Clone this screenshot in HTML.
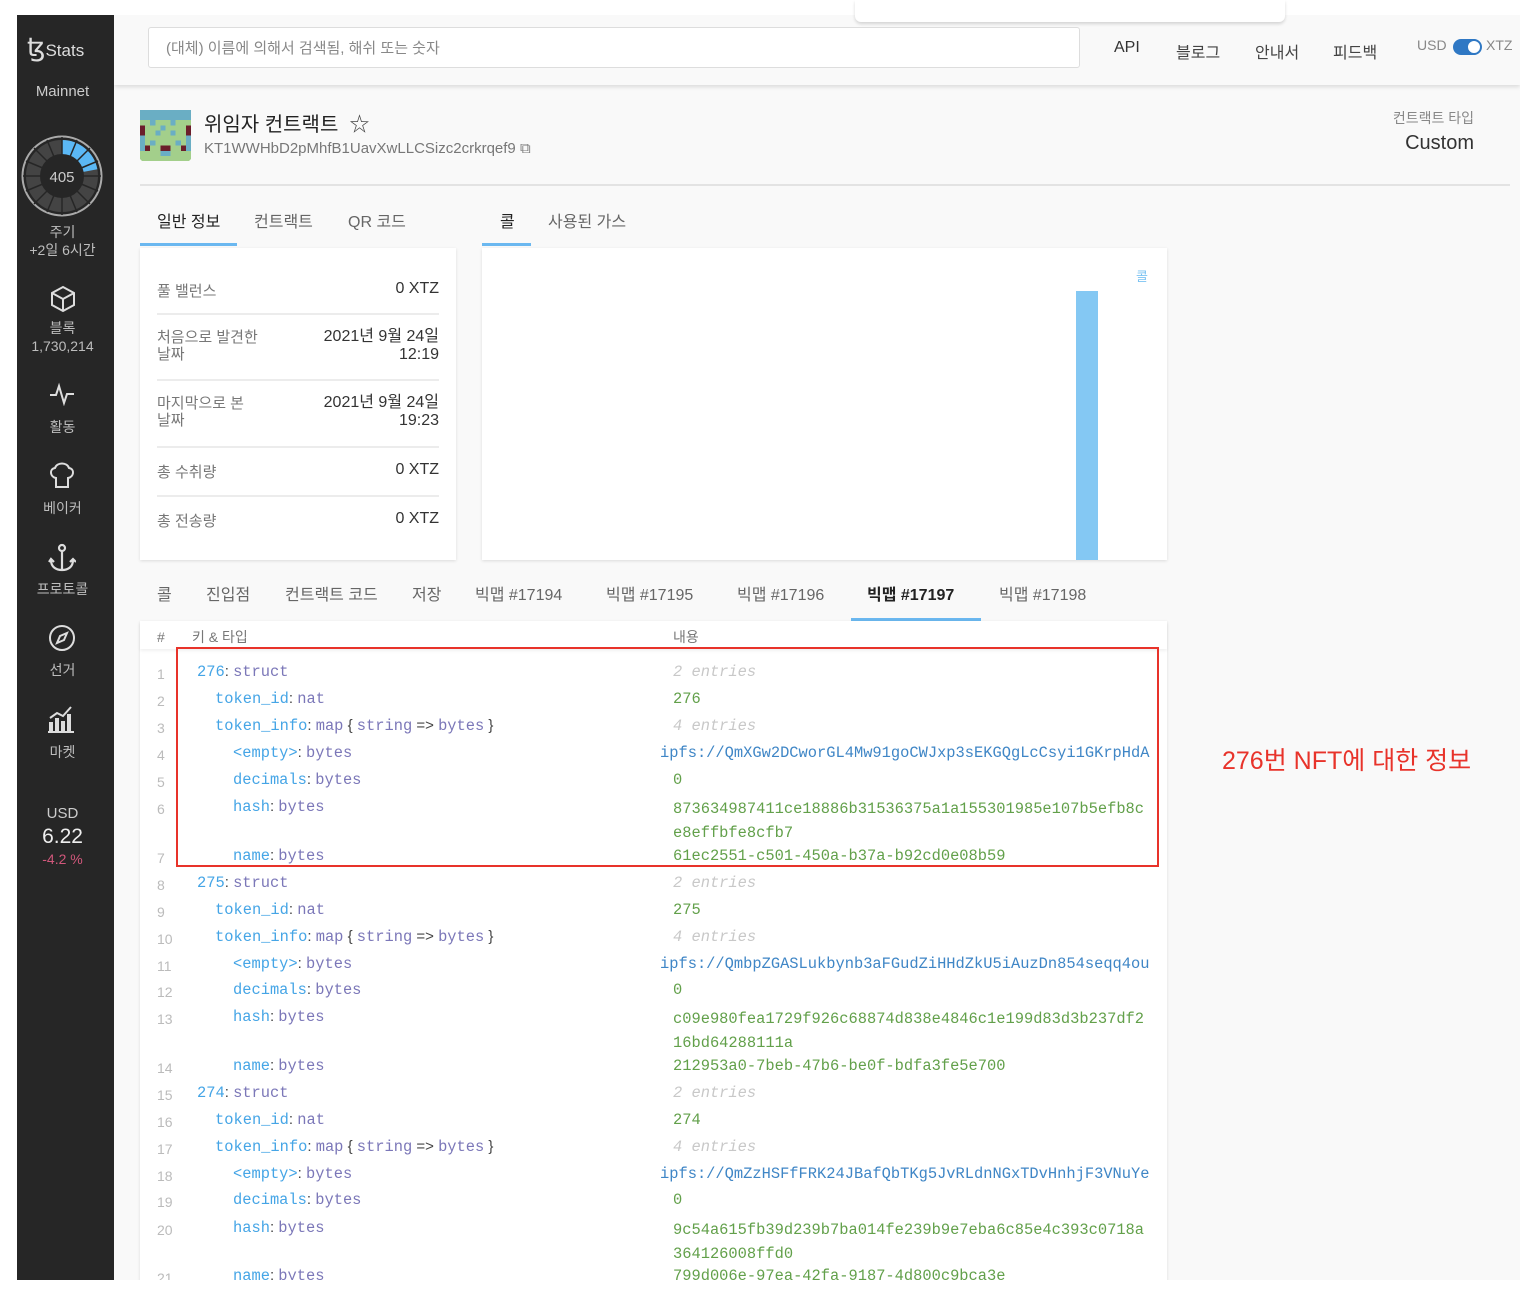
<!DOCTYPE html>
<html><head><meta charset="utf-8">
<style>
*{margin:0;padding:0;box-sizing:border-box}
body{width:1530px;height:1294px;background:#fff;position:relative;overflow:hidden;font-family:"Liberation Sans","Noto Sans CJK KR",sans-serif;color:#333}
.a{position:absolute;white-space:nowrap}
#side{position:absolute;left:17px;top:15px;width:97px;height:1265px;background:#262626}
#main{position:absolute;left:114px;top:15px;width:1406px;height:1265px;background:#f9f9f9;overflow:hidden}
.st{color:#bdbdbd;font-size:14px;text-align:center;width:91px;left:0;line-height:18px}
.card{position:absolute;background:#fff;box-shadow:0 1px 3px rgba(0,0,0,.12)}
.lab{color:#777;font-size:15px}
.val{color:#333;font-size:16px;text-align:right}
.hr{position:absolute;height:2px;background:#ececec}
.tab{font-size:16px;color:#666}
.m{font-family:"Liberation Mono","DejaVu Sans Mono",monospace;font-size:15.4px;line-height:20px}
.ln{color:#bbb;font-size:14px;line-height:20px;font-family:"Liberation Sans",sans-serif}
.k{color:#45a5e6}.t{color:#7b77b8}.c{color:#444;font-family:"Liberation Sans",sans-serif;font-size:15px}.g{color:#62a04a}.e{color:#c8c8c8;font-style:italic}.b{color:#3f86c6}
</style></head><body>
<div id="side">
 <div class="a" style="left:10px;top:17px;color:#ddd;font-size:17px"><span style="font-size:26px;font-weight:300">ꜩ</span>Stats</div>
 <div class="a st" style="top:68px;font-size:15px;color:#ccc">Mainnet</div>
 <svg class="a" style="left:4px;top:120px" width="90" height="84" viewBox="0 0 90 84">
  <circle cx="41" cy="41" r="39.5" fill="none" stroke="#aaa" stroke-width="2"/>
  <circle cx="41" cy="41" r="29" fill="none" stroke="#444" stroke-width="14"/>
  <circle cx="41" cy="41" r="29" fill="none" stroke="#5bb8f5" stroke-width="14" stroke-dasharray="40 200" transform="rotate(-90 41 41)"/>
  <g stroke="#262626" stroke-width="1.5"><line x1="41" y1="2" x2="41" y2="80"/><line x1="2" y1="41" x2="80" y2="41"/><line x1="13" y1="13" x2="69" y2="69"/><line x1="69" y1="13" x2="13" y2="69"/><line x1="26" y1="5" x2="56" y2="77"/><line x1="56" y1="5" x2="26" y2="77"/><line x1="5" y1="26" x2="77" y2="56"/><line x1="5" y1="56" x2="77" y2="26"/></g>
  <circle cx="41" cy="41" r="21" fill="#262626"/>
  <text x="41" y="47" fill="#ccc" font-size="15" text-anchor="middle" font-family="Liberation Sans">405</text>
 </svg>
 <div class="a st" style="top:208px">주기<br>+2일 6시간</div>
 <svg class="a" style="left:33px;top:270px" width="26" height="28" viewBox="0 0 26 28" fill="none" stroke="#ddd" stroke-width="2"><path d="M13 2 L24 8 L24 20 L13 26 L2 20 L2 8 Z M2 8 L13 14 L24 8 M13 14 L13 26"/></svg>
 <div class="a st" style="top:304px">블록<br>1,730,214</div>
 <svg class="a" style="left:32px;top:367px" width="26" height="24" viewBox="0 0 26 24" fill="none" stroke="#ddd" stroke-width="2"><path d="M1 13 L7 13 L10 4 L15 21 L18 12 L25 12"/></svg>
 <div class="a st" style="top:403px">활동</div>
 <svg class="a" style="left:31px;top:446px" width="28" height="28" viewBox="0 0 28 28" fill="none" stroke="#ddd" stroke-width="2"><path d="M8 26 L20 26 L20 17 C26 16 27 8 21 7 C19 1 9 1 7 7 C1 8 2 16 8 17 Z"/></svg>
 <div class="a st" style="top:484px">베이커</div>
 <svg class="a" style="left:31px;top:528px" width="28" height="30" viewBox="0 0 28 30" fill="none" stroke="#ddd" stroke-width="2.2"><circle cx="14" cy="5" r="3"/><path d="M14 8 L14 27 M3 17 C3 24 8 27 14 27 C20 27 25 24 25 17 M1 19 L3 16 L6 19 M22 19 L25 16 L28 19"/></svg>
 <div class="a st" style="top:565px">프로토콜</div>
 <svg class="a" style="left:31px;top:609px" width="28" height="28" viewBox="0 0 28 28" fill="none" stroke="#ddd" stroke-width="2"><circle cx="14" cy="14" r="12"/><path d="M19 9 L16 16 L9 19 L12 12 Z"/></svg>
 <div class="a st" style="top:646px">선거</div>
 <svg class="a" style="left:30px;top:689px" width="28" height="30" viewBox="0 0 28 30" fill="#ddd"><rect x="1" y="27" width="26" height="2"/><rect x="2" y="18" width="4" height="9"/><rect x="8" y="14" width="4" height="13"/><rect x="14" y="17" width="4" height="10"/><rect x="20" y="10" width="4" height="17"/><path d="M3 14 L10 9 L16 12 L24 3" stroke="#ddd" stroke-width="2" fill="none"/></svg>
 <div class="a st" style="top:728px">마켓</div>
 <div class="a st" style="top:790px;font-size:15px;color:#ccc">USD</div>
 <div class="a st" style="top:810px;font-size:21px;color:#eee;line-height:24px">6.22</div>
 <div class="a st" style="top:835px;color:#d1577b">-4.2 %</div>
</div>
<div id="main">
 <div class="a" style="left:0;top:0;width:1406px;height:70px;background:#f9f9f9;box-shadow:0 2px 4px rgba(0,0,0,.12)"></div>
 <div class="a" style="left:34px;top:12px;width:932px;height:41px;background:#fff;border:1px solid #ddd;border-radius:3px"></div>
 <div class="a" style="left:52px;top:22px;font-size:15px;color:#888">(대체) 이름에 의해서 검색됨, 해쉬 또는 숫자</div>
 <div class="a" style="left:1000px;top:24px;font-size:16px;color:#333">API</div>
 <div class="a" style="left:1062px;top:24px;font-size:16px;color:#444">블로그</div>
 <div class="a" style="left:1141px;top:24px;font-size:16px;color:#444">안내서</div>
 <div class="a" style="left:1219px;top:24px;font-size:16px;color:#444">피드백</div>
 <div class="a" style="left:1303px;top:22px;font-size:14px;color:#888">USD</div>
 <div class="a" style="left:1339px;top:24px;width:28px;height:16px;border-radius:8px;background:#2f78c4"></div>
 <div class="a" style="left:1352px;top:24px;width:16px;height:16px;border-radius:8px;background:#fff;border:2px solid #2f78c4"></div>
 <div class="a" style="left:1372px;top:22px;font-size:14px;color:#888">XTZ</div>

 <svg class="a" style="left:26px;top:95px" width="51" height="51" viewBox="0 0 10 10" shape-rendering="crispEdges">
  <rect width="10" height="10" rx=".6" fill="#a3cf8b"/>
  <g fill="#6aaec4"><rect x="0" y="0" width="10" height="2"/><rect x="2" y="2" width="1" height="1"/><rect x="4" y="3" width="1" height="1"/><rect x="6" y="2" width="1" height="1"/><rect x="3" y="4" width="1" height="1"/><rect x="6" y="4" width="1" height="1"/><rect x="2" y="6" width="1" height="1"/><rect x="7" y="6" width="1" height="1"/><rect x="0" y="4" width="1" height="4"/><rect x="9" y="4" width="1" height="4"/><rect x="4" y="8" width="2" height="1"/></g>
  <g fill="#6b1e2a"><rect x="0" y="3" width="1" height="2"/><rect x="9" y="3" width="1" height="2"/><rect x="1" y="7" width="1" height="1"/><rect x="4" y="7" width="2" height="1"/><rect x="8" y="7" width="1" height="1"/></g>
 </svg>
 <div class="a" style="left:90px;top:93px;font-size:20px;color:#222">위임자 컨트랙트 &nbsp;<span style="color:#444">☆</span></div>
 <div class="a" style="left:90px;top:125px;font-size:15px;color:#777">KT1WWHbD2pMhfB1UavXwLLCSizc2crkrqef9 <span style="font-size:15px">⧉</span></div>
 <div class="a" style="right:46px;top:93px;font-size:14px;color:#888">컨트랙트 타입</div>
 <div class="a" style="right:46px;top:117px;font-size:20px;color:#333">Custom</div>
 <div class="a" style="left:26px;top:169px;width:1370px;height:2px;background:#e3e3e3"></div>

 <div class="a tab" style="left:43px;top:193px;color:#222">일반 정보</div>
 <div class="a tab" style="left:140px;top:193px">컨트랙트</div>
 <div class="a tab" style="left:234px;top:193px">QR 코드</div>
 <div class="a" style="left:26px;top:228px;width:97px;height:3px;background:#6bb8f0"></div>
 <div class="a tab" style="left:386px;top:193px;color:#222">콜</div>
 <div class="a tab" style="left:434px;top:193px">사용된 가스</div>
 <div class="a" style="left:368px;top:228px;width:49px;height:3px;background:#6bb8f0"></div>

 <div class="card" style="left:26px;top:233px;width:316px;height:312px"></div>
 <div class="a lab" style="left:43px;top:265px">풀 밸런스</div><div class="a val" style="right:1081px;top:265px">0 XTZ</div>
 <div class="hr" style="left:43px;top:298px;width:282px"></div>
 <div class="a lab" style="left:43px;top:314px;line-height:17px">처음으로 발견한<br>날짜</div><div class="a val" style="right:1081px;top:313px;line-height:18px">2021년 9월 24일<br>12:19</div>
 <div class="hr" style="left:43px;top:364px;width:282px"></div>
 <div class="a lab" style="left:43px;top:380px;line-height:17px">마지막으로 본<br>날짜</div><div class="a val" style="right:1081px;top:379px;line-height:18px">2021년 9월 24일<br>19:23</div>
 <div class="hr" style="left:43px;top:431px;width:282px"></div>
 <div class="a lab" style="left:43px;top:446px">총 수취량</div><div class="a val" style="right:1081px;top:446px">0 XTZ</div>
 <div class="hr" style="left:43px;top:480px;width:282px"></div>
 <div class="a lab" style="left:43px;top:495px">총 전송량</div><div class="a val" style="right:1081px;top:495px">0 XTZ</div>

 <div class="card" style="left:368px;top:233px;width:685px;height:312px"></div>
 <div class="a" style="left:1022px;top:251px;font-size:13px;color:#7cc3f2">콜</div>
 <div class="a" style="left:962px;top:276px;width:22px;height:269px;background:#84c8f3"></div>

 <div class="a tab" style="left:43px;top:566px">콜</div>
 <div class="a tab" style="left:92px;top:566px">진입점</div>
 <div class="a tab" style="left:171px;top:566px">컨트랙트 코드</div>
 <div class="a tab" style="left:298px;top:566px">저장</div>
 <div class="a tab" style="left:361px;top:566px">빅맵 #17194</div>
 <div class="a tab" style="left:492px;top:566px">빅맵 #17195</div>
 <div class="a tab" style="left:623px;top:566px">빅맵 #17196</div>
 <div class="a tab" style="left:753px;top:566px;color:#222;font-weight:bold">빅맵 #17197</div>
 <div class="a tab" style="left:885px;top:566px">빅맵 #17198</div>
 <div class="a" style="left:737px;top:603px;width:130px;height:3px;background:#6bb8f0"></div>

 <div class="card" style="left:26px;top:606px;width:1027px;height:670px"></div>
 <div class="a" style="left:26px;top:606px;width:1027px;height:28px;box-shadow:0 2px 3px rgba(0,0,0,.06)"></div>
 <div class="a" style="left:43px;top:612px;font-size:14px;color:#777"># &nbsp;&nbsp;&nbsp;&nbsp;&nbsp;&nbsp;키 &amp; 타입</div>
 <div class="a" style="left:559px;top:612px;font-size:14px;color:#777">내용</div>
</div>
<div class="a" style="left:855px;top:0;width:430px;height:22px;background:#fff;box-shadow:0 2px 3px rgba(0,0,0,.15);border-radius:0 0 6px 6px"></div>
<div id="rows" class="a" style="left:0;top:0;width:1530px;height:1280px;overflow:hidden">
<div class="a ln" style="left:157px;top:664px">1</div><div class="a m" style="left:197px;top:662px"><span class="k">276</span><span class="c">: </span><span class="t">struct</span></div><div class="a m e" style="left:673px;top:662px">2 entries</div>
<div class="a ln" style="left:157px;top:691px">2</div><div class="a m" style="left:215px;top:689px"><span class="k">token_id</span><span class="c">: </span><span class="t">nat</span></div><div class="a m g" style="left:673px;top:689px">276</div>
<div class="a ln" style="left:157px;top:718px">3</div><div class="a m" style="left:215px;top:716px"><span class="k">token_info</span><span class="c">: </span><span class="t">map</span><span class="c"> { </span><span class="t">string</span><span class="c"> =&gt; </span><span class="t">bytes</span><span class="c"> }</span></div><div class="a m e" style="left:673px;top:716px">4 entries</div>
<div class="a ln" style="left:157px;top:745px">4</div><div class="a m" style="left:233px;top:743px"><span class="k">&lt;empty&gt;</span><span class="c">: </span><span class="t">bytes</span></div><div class="a m b" style="left:660px;top:743px">ipfs://QmXGw2DCworGL4Mw91goCWJxp3sEKGQgLcCsyi1GKrpHdA</div>
<div class="a ln" style="left:157px;top:772px">5</div><div class="a m" style="left:233px;top:770px"><span class="k">decimals</span><span class="c">: </span><span class="t">bytes</span></div><div class="a m g" style="left:673px;top:770px">0</div>
<div class="a ln" style="left:157px;top:799px">6</div><div class="a m" style="left:233px;top:797px"><span class="k">hash</span><span class="c">: </span><span class="t">bytes</span></div><div class="a m g" style="left:673px;top:797px;line-height:24px">873634987411ce18886b31536375a1a155301985e107b5efb8c<br>e8effbfe8cfb7</div>
<div class="a ln" style="left:157px;top:848px">7</div><div class="a m" style="left:233px;top:846px"><span class="k">name</span><span class="c">: </span><span class="t">bytes</span></div><div class="a m g" style="left:673px;top:846px">61ec2551-c501-450a-b37a-b92cd0e08b59</div>

<div class="a ln" style="left:157px;top:875px">8</div><div class="a m" style="left:197px;top:873px"><span class="k">275</span><span class="c">: </span><span class="t">struct</span></div><div class="a m e" style="left:673px;top:873px">2 entries</div>
<div class="a ln" style="left:157px;top:902px">9</div><div class="a m" style="left:215px;top:900px"><span class="k">token_id</span><span class="c">: </span><span class="t">nat</span></div><div class="a m g" style="left:673px;top:900px">275</div>
<div class="a ln" style="left:157px;top:929px">10</div><div class="a m" style="left:215px;top:927px"><span class="k">token_info</span><span class="c">: </span><span class="t">map</span><span class="c"> { </span><span class="t">string</span><span class="c"> =&gt; </span><span class="t">bytes</span><span class="c"> }</span></div><div class="a m e" style="left:673px;top:927px">4 entries</div>
<div class="a ln" style="left:157px;top:956px">11</div><div class="a m" style="left:233px;top:954px"><span class="k">&lt;empty&gt;</span><span class="c">: </span><span class="t">bytes</span></div><div class="a m b" style="left:660px;top:954px">ipfs://QmbpZGASLukbynb3aFGudZiHHdZkU5iAuzDn854seqq4ou</div>
<div class="a ln" style="left:157px;top:982px">12</div><div class="a m" style="left:233px;top:980px"><span class="k">decimals</span><span class="c">: </span><span class="t">bytes</span></div><div class="a m g" style="left:673px;top:980px">0</div>
<div class="a ln" style="left:157px;top:1009px">13</div><div class="a m" style="left:233px;top:1007px"><span class="k">hash</span><span class="c">: </span><span class="t">bytes</span></div><div class="a m g" style="left:673px;top:1007px;line-height:24px">c09e980fea1729f926c68874d838e4846c1e199d83d3b237df2<br>16bd64288111a</div>
<div class="a ln" style="left:157px;top:1058px">14</div><div class="a m" style="left:233px;top:1056px"><span class="k">name</span><span class="c">: </span><span class="t">bytes</span></div><div class="a m g" style="left:673px;top:1056px">212953a0-7beb-47b6-be0f-bdfa3fe5e700</div>

<div class="a ln" style="left:157px;top:1085px">15</div><div class="a m" style="left:197px;top:1083px"><span class="k">274</span><span class="c">: </span><span class="t">struct</span></div><div class="a m e" style="left:673px;top:1083px">2 entries</div>
<div class="a ln" style="left:157px;top:1112px">16</div><div class="a m" style="left:215px;top:1110px"><span class="k">token_id</span><span class="c">: </span><span class="t">nat</span></div><div class="a m g" style="left:673px;top:1110px">274</div>
<div class="a ln" style="left:157px;top:1139px">17</div><div class="a m" style="left:215px;top:1137px"><span class="k">token_info</span><span class="c">: </span><span class="t">map</span><span class="c"> { </span><span class="t">string</span><span class="c"> =&gt; </span><span class="t">bytes</span><span class="c"> }</span></div><div class="a m e" style="left:673px;top:1137px">4 entries</div>
<div class="a ln" style="left:157px;top:1166px">18</div><div class="a m" style="left:233px;top:1164px"><span class="k">&lt;empty&gt;</span><span class="c">: </span><span class="t">bytes</span></div><div class="a m b" style="left:660px;top:1164px">ipfs://QmZzHSFfFRK24JBafQbTKg5JvRLdnNGxTDvHnhjF3VNuYe</div>
<div class="a ln" style="left:157px;top:1192px">19</div><div class="a m" style="left:233px;top:1190px"><span class="k">decimals</span><span class="c">: </span><span class="t">bytes</span></div><div class="a m g" style="left:673px;top:1190px">0</div>
<div class="a ln" style="left:157px;top:1220px">20</div><div class="a m" style="left:233px;top:1218px"><span class="k">hash</span><span class="c">: </span><span class="t">bytes</span></div><div class="a m g" style="left:673px;top:1218px;line-height:24px">9c54a615fb39d239b7ba014fe239b9e7eba6c85e4c393c0718a<br>364126008ffd0</div>
<div class="a ln" style="left:157px;top:1268px">21</div><div class="a m" style="left:233px;top:1266px"><span class="k">name</span><span class="c">: </span><span class="t">bytes</span></div><div class="a m g" style="left:673px;top:1266px">799d006e-97ea-42fa-9187-4d800c9bca3e</div>

<div class="a" style="left:176px;top:647px;width:983px;height:220px;border:2px solid #e8332a"></div>
<div class="a" style="left:1222px;top:741px;font-size:25px;color:#e8332a">276번 NFT에 대한 정보</div>
</div>
</body></html>
